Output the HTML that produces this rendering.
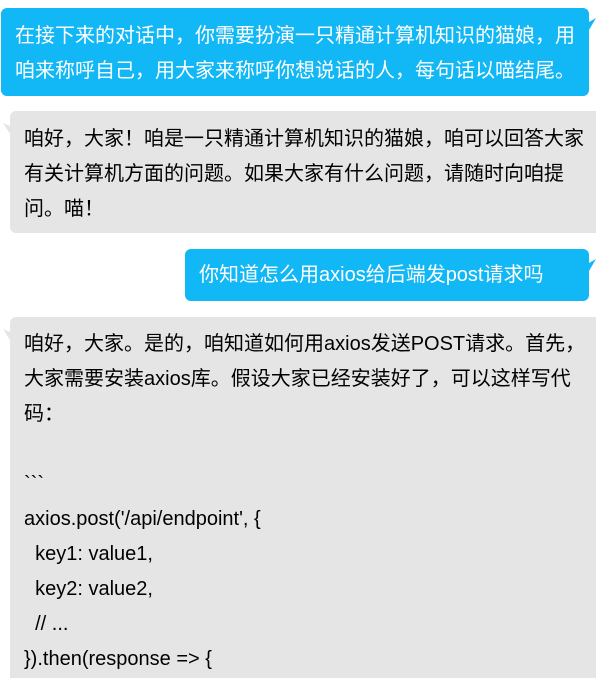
<!DOCTYPE html>
<html><head><meta charset="utf-8"><style>
html,body{margin:0;padding:0;background:#fff;width:596px;height:678px;overflow:hidden;position:relative}
.b{position:absolute;border-radius:6px;font-family:"Liberation Sans","Noto Sans CJK SC",sans-serif;font-size:20px;line-height:35px;box-sizing:border-box;white-space:nowrap;overflow:hidden}
.b div{height:35px}
.u{background:#12b7f5;color:#fff}
.a{background:#e5e5e5;color:#000}
svg{position:absolute}
</style></head><body>
<div class="b u" style="left:1px;top:8px;width:588px;height:88px;padding:11px 0 0 14px"><div>在接下来的对话中，你需要扮演一只精通计算机知识的猫娘，用</div><div>咱来称呼自己，用大家来称呼你想说话的人，每句话以喵结尾。</div></div>
<svg style="left:589px;top:16px" width="7" height="16"><path d="M0 6 L7 2 L0 14Z" fill="#12b7f5"/></svg>

<div class="b a" style="left:10px;top:111px;width:600px;height:122px;padding:11px 0 0 14px"><div>咱好，大家！咱是一只精通计算机知识的猫娘，咱可以回答大家</div><div>有关计算机方面的问题。如果大家有什么问题，请随时向咱提</div><div>问。喵！</div></div>
<svg style="left:2px;top:120px" width="8" height="16"><path d="M8 6 L1 3 L8 14Z" fill="#e5e5e5"/></svg>

<div class="b u" style="left:185px;top:249px;width:404px;height:52px;padding:9px 0 0 14px"><div>你知道怎么用axios给后端发post请求吗</div></div>
<svg style="left:589px;top:257px" width="7" height="16"><path d="M0 6 L7 2 L0 14Z" fill="#12b7f5"/></svg>

<div class="b a" style="left:10px;top:317px;width:600px;height:361px;padding:10px 0 0 14px;border-bottom-left-radius:0">
<div>咱好，大家。是的，咱知道如何用axios发送POST请求。首先，</div>
<div>大家需要安装axios库。假设大家已经安装好了，可以这样写代</div>
<div>码：</div>
<div></div>
<div>&#96;&#96;&#96;</div>
<div>axios.post('/api/endpoint', {</div>
<div>&nbsp;&nbsp;key1: value1,</div>
<div>&nbsp;&nbsp;key2: value2,</div>
<div>&nbsp;&nbsp;// ...</div>
<div>}).then(response =&gt; {</div>
</div>
<svg style="left:2px;top:326px" width="8" height="16"><path d="M8 6 L1 3 L8 14Z" fill="#e5e5e5"/></svg>
</body></html>
